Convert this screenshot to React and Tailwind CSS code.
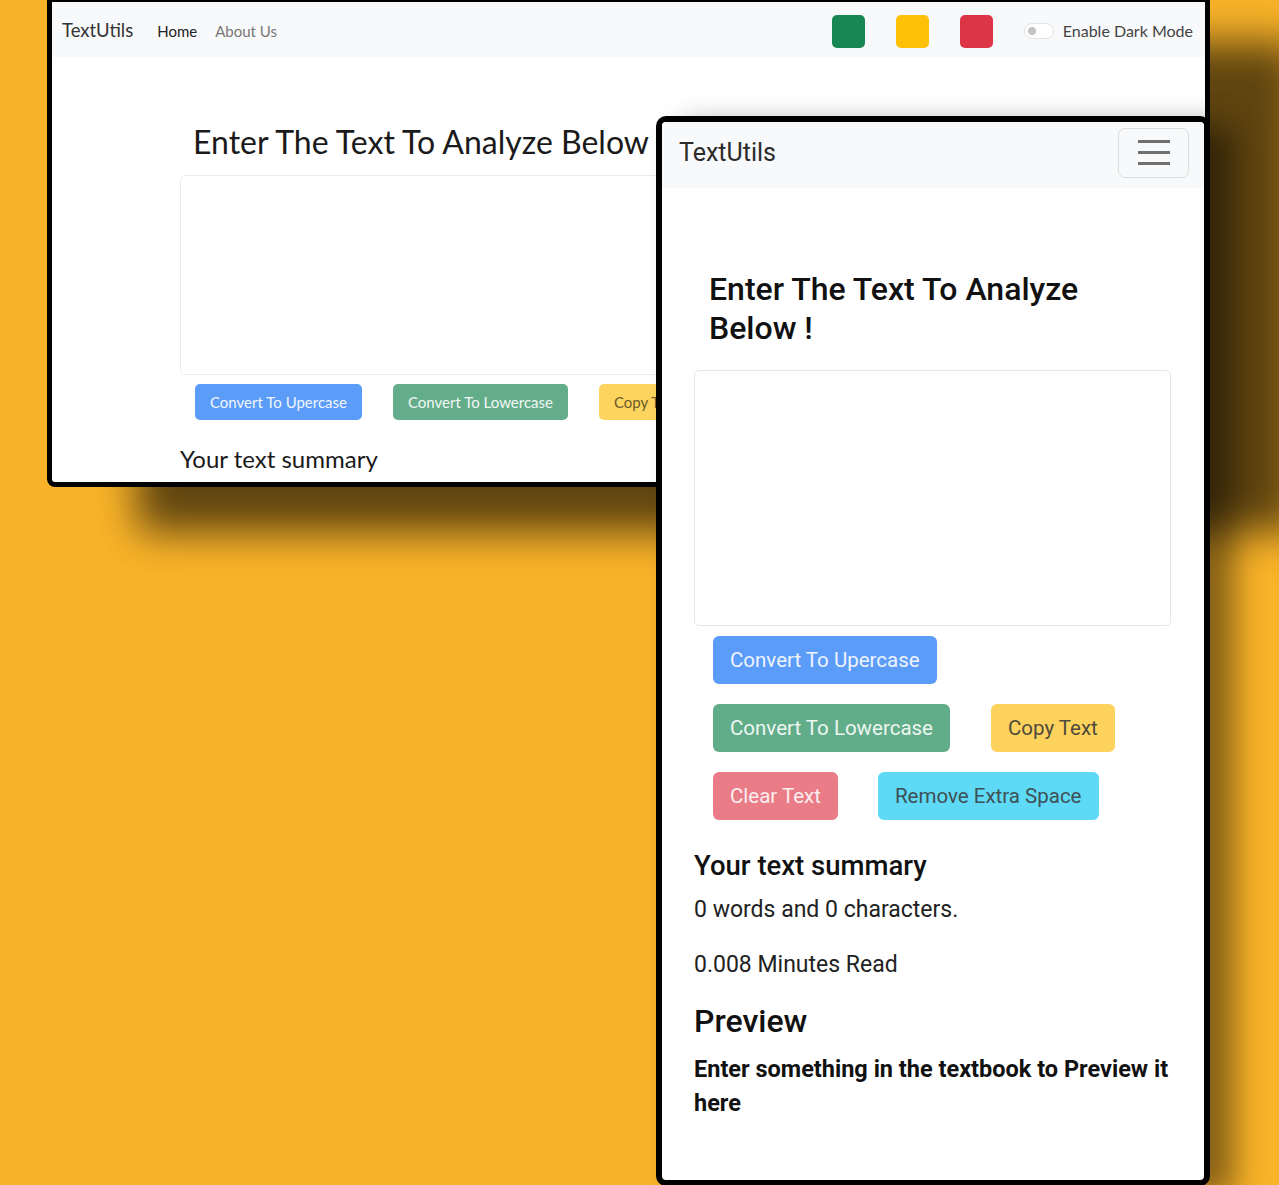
import React from "react";

function DesktopView() {
  return (
    <div className="absolute left-[47px] top-[-3px] w-[1163px] h-[490px] border-[5px] border-black rounded-b-[8px] bg-white overflow-hidden shadow-[90px_45px_40px_rgba(0,0,0,0.62)] font-['Lato',sans-serif]">
      <nav className="h-[55px] bg-[#f8f9fa] flex items-center pt-[3px] pl-[10px] pr-[12px]">
        <span className="text-[18.5px] text-[#333]">TextUtils</span>
        <span className="ml-[24px] text-[15px] text-[#222]">Home</span>
        <span className="ml-[18px] text-[15px] text-[#777]">About Us</span>
        <div className="ml-auto flex items-center">
          <div className="w-[33px] h-[33px] rounded-[5px] bg-[#198754]"></div>
          <div className="ml-[31px] w-[33px] h-[33px] rounded-[5px] bg-[#ffc107]"></div>
          <div className="ml-[31px] w-[33px] h-[33px] rounded-[5px] bg-[#dc3545]"></div>
          <div className="ml-[31px] w-[30px] h-[16px] rounded-full bg-white border border-[#e3e3e3] flex items-center pl-[3px]">
            <div className="w-[8px] h-[8px] rounded-full bg-[#c4c4c4]"></div>
          </div>
          <span className="ml-[9px] text-[16px] text-[#444]">Enable Dark Mode</span>
        </div>
      </nav>
      <div className="pl-[128px] flex flex-col">
        <h1 className="mt-[65px] ml-[13px] text-[32px] leading-[40px] text-[#1a1a1a]">
          Enter The Text To Analyze Below
        </h1>
        <div className="mt-[13px] w-[896px] h-[200px] border border-[#ececec] rounded-[5px]"></div>
        <div className="mt-[9px] ml-[15px] flex gap-[31px]">
          <button className="h-[36px] px-[15px] rounded-[5px] bg-[#5b9cf8] text-[15px] text-[#f2f6ff]">
            Convert To Upercase
          </button>
          <button className="h-[36px] px-[15px] rounded-[5px] bg-[#64ad8b] text-[15px] text-[#f2f8f4]">
            Convert To Lowercase
          </button>
          <button className="h-[36px] px-[15px] rounded-[5px] bg-[#fcd45e] text-[15px] text-[#6b5a2a]">
            Copy Text
          </button>
        </div>
        <h2 className="mt-[24px] text-[24px] leading-[30px] text-[#1a1a1a]">Your text summary</h2>
      </div>
    </div>
  );
}

function MobileView() {
  return (
    <div className="absolute left-[656px] top-[116px] w-[554px] h-[1070px] border-[6px] border-black rounded-[10px] bg-white overflow-hidden shadow-[25px_10px_30px_rgba(0,0,0,0.45)] font-['Roboto',sans-serif]">
      <nav className="h-[66px] bg-[#f8f9fa] flex items-center justify-between pb-[5px] pl-[17px] pr-[15px]">
        <span className="text-[25px] text-[#2b2b2b]">TextUtils</span>
        <button className="w-[71px] h-[50px] rounded-[7px] border border-[#dcdcdc] flex flex-col items-center justify-center gap-[8px]">
          <span className="block w-[32px] h-[3px] bg-[#6f6f6f]"></span>
          <span className="block w-[32px] h-[3px] bg-[#6f6f6f]"></span>
          <span className="block w-[32px] h-[3px] bg-[#6f6f6f]"></span>
        </button>
      </nav>
      <div className="pl-[32px] flex flex-col">
        <h1 className="mt-[82px] ml-[15px] text-[32px] leading-[39px] font-medium text-[#111]">
          Enter The Text To Analyze
          <br />
          Below !
        </h1>
        <div className="mt-[22px] w-[477px] h-[256px] border border-[#e6e6e6] rounded-[5px]"></div>
        <div className="ml-[19px] mt-[10px] flex flex-col gap-[20px] text-[20.5px]">
          <div className="flex gap-[41px]">
            <button className="h-[48px] px-[17px] rounded-[6px] bg-[#5c9cf9] text-[#eef3fd]">Convert To Upercase</button>
          </div>
          <div className="flex gap-[41px]">
            <button className="h-[48px] px-[17px] rounded-[6px] bg-[#62ad89] text-[#eef6f1]">Convert To Lowercase</button>
            <button className="h-[48px] px-[17px] rounded-[6px] bg-[#fdd35d] text-[#4f4a3c]">Copy Text</button>
          </div>
          <div className="flex gap-[40px]">
            <button className="h-[48px] px-[17px] rounded-[6px] bg-[#e97c86] text-[#fbeef0]">Clear Text</button>
            <button className="h-[48px] px-[17px] rounded-[6px] bg-[#5ed9f6] text-[#3f5055]">Remove Extra Space</button>
          </div>
        </div>
        <h2 className="mt-[30px] text-[27.5px] leading-[32px] font-medium text-[#111]">Your text summary</h2>
        <p className="mt-[13px] text-[23px] leading-[30px] text-[#222]">0 words and 0 characters.</p>
        <p className="mt-[25px] text-[23px] leading-[30px] text-[#222]">0.008 Minutes Read</p>
        <h2 className="mt-[21px] text-[32px] leading-[40px] font-medium text-[#111]">Preview</h2>
        <p className="mt-[11px] text-[23.5px] leading-[34px] font-bold text-[#111]">
          Enter something in the textbook to Preview it
          <br />
          here
        </p>
      </div>
    </div>
  );
}

export default function App() {
  return (
    <div className="relative w-[1279px] h-[1185px] bg-[#f9b329] overflow-hidden">
      <DesktopView />
      <MobileView />
    </div>
  );
}
